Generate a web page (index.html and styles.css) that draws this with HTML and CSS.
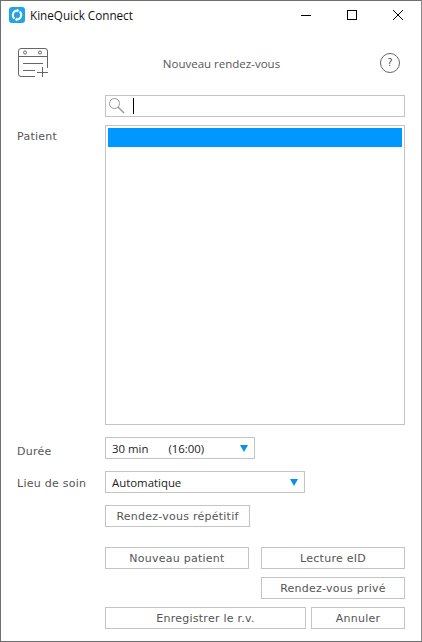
FILE: index.html
```html
<!DOCTYPE html>
<html lang="fr">
<head>
<meta charset="utf-8">
<title>KineQuick Connect</title>
<link rel="stylesheet" href="styles.css">
</head>
<body>
<div class="window">
  <div class="titlebar">
    <svg class="logo" width="16" height="16" viewBox="0 0 16 16">
      <rect width="16" height="16" rx="3" fill="#1fa5e6"/>
      <path d="M9.2 3.6A4.6 4.6 0 0 0 5.4 11.6M6.8 12.4A4.6 4.6 0 0 0 10.6 4.4" fill="none" stroke="#fff" stroke-width="2"/>
      <path d="M8 1.8v3.6l2.4-1.8zM8 14.2v-3.6l-2.4 1.8z" fill="#fff"/>
    </svg>
    <span class="app-name">KineQuick Connect</span>
    <div class="controls">
      <svg class="ctl" width="46" height="30" viewBox="0 0 46 30"><path d="M18 15.500h10" stroke="#000" fill="none"/></svg>
      <svg class="ctl" width="46" height="30" viewBox="0 0 46 30"><rect x="18.500" y="10.500" width="9" height="9" stroke="#000" fill="none"/></svg>
      <svg class="ctl" width="46" height="30" viewBox="0 0 46 30"><path d="M18 10l10 10M28 10l-10 10" stroke="#000" fill="none"/></svg>
    </div>
  </div>
  <div class="header">
    <svg class="cal" width="31" height="30" viewBox="0 0 31 30">
      <g fill="none" stroke="#666" stroke-width="1">
        <path d="M17 28.500H3A2.500 2.500 0 0 1 .5 26V3A2.500 2.500 0 0 1 3 .5H27A2.500 2.500 0 0 1 29.500 3V20"/>
        <path d="M.5 8.500H29.500M5 15.500H25M5 22.500H17M19 24.500H30M24.500 19V29"/>
        <circle cx="7" cy="4.500" r="1.500"/>
        <circle cx="22" cy="4.500" r="1.500"/>
      </g>
    </svg>
    <h1 class="heading">Nouveau rendez-vous</h1>
    <div class="help">?</div>
  </div>
  <div class="form">
    <div class="search">
      <svg class="glass" width="16" height="16" viewBox="0 0 16 16"><g fill="none" stroke="#999" stroke-width="1"><circle cx="5.500" cy="5.500" r="5"/><path d="M9 9l6 6" stroke-width="1.400"/></g></svg>
      <span class="caret"></span>
    </div>
    <div class="row patient-row">
      <span class="label">Patient</span>
      <div class="listbox"><div class="selected"></div></div>
    </div>
    <div class="row duree-row">
      <span class="label">Durée</span>
      <div class="select w150"><span class="val">30 min</span><span class="val time">(16:00)</span><i class="arrow"></i></div>
    </div>
    <div class="row lieu-row">
      <span class="label">Lieu de soin</span>
      <div class="select w200"><span class="val">Automatique</span><i class="arrow"></i></div>
    </div>
    <div class="actions">
      <button class="btn repeat">Rendez-vous répétitif</button>
      <div class="btn-grid">
        <button class="btn">Nouveau patient</button>
        <button class="btn">Lecture eID</button>
        <button class="btn private">Rendez-vous privé</button>
      </div>
      <div class="btn-last">
        <button class="btn save">Enregistrer le r.v.</button>
        <button class="btn cancel">Annuler</button>
      </div>
    </div>
  </div>
</div>
</body>
</html>
```

FILE: styles.css
```css
* { box-sizing: border-box; }
html, body { margin: 0; padding: 0; background: #fff; }
.window {
  width: 422px; height: 642px; background: #fff;
  border: 1px solid #6e6e6e; border-right-color: #8a8a8a;
  font-family: "DejaVu Sans", sans-serif; font-size: 11px; color: #555;
  display: flex; flex-direction: column; overflow: hidden;
}
.titlebar { height: 30px; display: flex; align-items: flex-start; padding: 6px 0 0 8px; flex: none; }
.logo { flex: none; }
.app-name { margin-left: 5px; font: 11.700px/16px "Open Sans", sans-serif; color: #111; }
.controls { margin: -7px 0 0 auto; display: flex; }
.ctl { display: block; }
.header { height: 64px; display: flex; align-items: flex-start; padding: 17px 21px 0 17px; flex: none; }
.cal { flex: none; }
.heading { flex: 1; margin: 8px 0 0; text-align: center; font: 400 11.500px/16px "Open Sans", sans-serif; color: #555; padding-left: 14px; }
.help { width: 20px; height: 20px; margin-top: 5px; border: 1.500px solid #666; border-radius: 50%; text-align: center; line-height: 17px; font-size: 10px; color: #555; flex: none; }
.form { padding-left: 104px; width: 404px; flex: 1; }
.search { height: 22px; border: 1px solid #c4c4c4; display: flex; align-items: center; padding-left: 3px; }
.caret { width: 1px; height: 16px; background: #000; margin-left: 8px; }
.row { position: relative; }
.label { position: absolute; left: -88px; top: 0; line-height: 14px; color: #555; letter-spacing: .25px; }
.patient-row { margin-top: 8px; }
.patient-row .label { top: 5px; }
.listbox { height: 300px; border: 1px solid #c4c4c4; padding: 2px; }
.selected { height: 19px; background: #0098ff; }
.duree-row { margin-top: 12px; }
.lieu-row { margin-top: 12px; }
.duree-row .label { top: 8px; }
.lieu-row .label { top: 6px; }
.select { height: 22px; border: 1px solid #c4c4c4; display: flex; align-items: center; padding-left: 6px; position: relative; font: 11.400px "Open Sans", sans-serif; color: #222; }
.w150 { width: 150px; }
.w200 { width: 200px; }
.time { margin-left: 20px; }
.arrow { position: absolute; right: 6px; top: 7px; width: 0; height: 0; border-left: 4px solid transparent; border-right: 4px solid transparent; border-top: 7px solid #0b8fe8; }
.actions { margin-top: 12px; }
.btn { height: 22px; border: 1px solid #c4c4c4; background: #fff; padding: 0; font: 11px "DejaVu Sans", sans-serif; letter-spacing: .25px; color: #555; display: block; }
.repeat { width: 145px; }
.btn-grid { margin-top: 20px; display: grid; grid-template-columns: 144px 144px; justify-content: space-between; row-gap: 8px; }
.private { grid-column: 2; }
.btn-last { margin-top: 8px; display: flex; justify-content: space-between; }
.save { width: 201px; }
.cancel { width: 94px; }
```
